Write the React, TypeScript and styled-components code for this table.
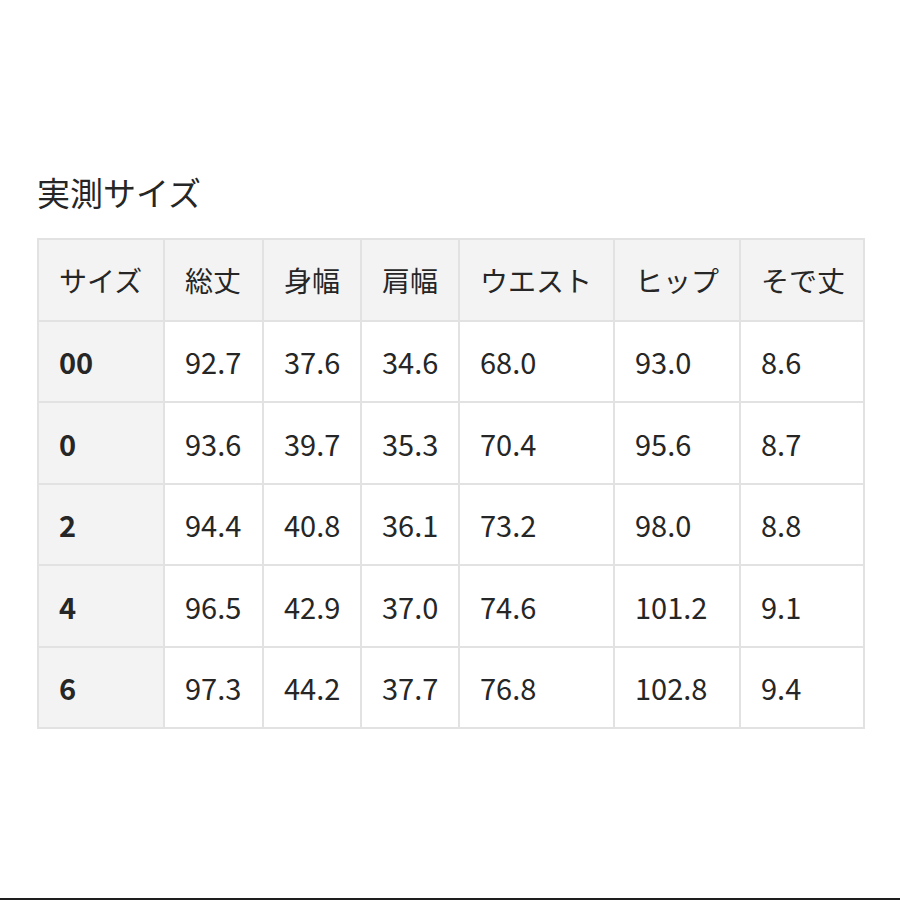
import React from "react";
import styled, { createGlobalStyle } from "styled-components";

const GlobalStyle = createGlobalStyle`
  html, body {
    margin: 0;
    padding: 0;
    background: #ffffff;
  }
  body {
    font-family: "Noto Sans CJK JP", "Noto Sans", sans-serif;
    color: #262626;
  }
`;

const Page = styled.div`
  width: 900px;
  height: 900px;
  display: flex;
  flex-direction: column;
  box-sizing: border-box;
  padding: 170px 37px 0 37px;
  position: relative;
`;

const Title = styled.h2`
  margin: 0 0 24px 0;
  font-size: 33px;
  font-weight: 400;
  line-height: 44px;
  color: #262626;
`;

const Table = styled.table`
  border-collapse: collapse;
  width: 826px;
  table-layout: fixed;
  border: 2px solid #e2e2e2;
`;

const Cell = styled.td<{ $head?: boolean; $bold?: boolean; $label?: boolean }>`
  height: 79.5px;
  padding: 0 0 0 20px;
  border: 2px solid #e2e2e2;
  background: ${(p) => (p.$head ? "#f3f3f3" : "#ffffff")};
  font-size: ${(p) => (p.$label ? "28px" : "29px")};
  font-weight: ${(p) => (p.$bold ? 700 : 400)};
  text-align: left;
  vertical-align: middle;
  white-space: nowrap;
  color: #262626;
`;

const BottomBar = styled.div`
  position: absolute;
  left: 0;
  right: 0;
  bottom: 0;
  height: 2px;
  background: #1e1e1e;
`;

const widths = [126, 99, 98, 98, 155, 126, 124];
const headers = ["サイズ", "総丈", "身幅", "肩幅", "ウエスト", "ヒップ", "そで丈"];
const rows = [
  ["00", "92.7", "37.6", "34.6", "68.0", "93.0", "8.6"],
  ["0", "93.6", "39.7", "35.3", "70.4", "95.6", "8.7"],
  ["2", "94.4", "40.8", "36.1", "73.2", "98.0", "8.8"],
  ["4", "96.5", "42.9", "37.0", "74.6", "101.2", "9.1"],
  ["6", "97.3", "44.2", "37.7", "76.8", "102.8", "9.4"],
];

export default function App() {
  return (
    <>
      <GlobalStyle />
      <Page>
        <Title>実測サイズ</Title>
        <Table>
          <colgroup>
            {widths.map((w, i) => (
              <col key={i} style={{ width: w }} />
            ))}
          </colgroup>
          <thead>
            <tr>
              {headers.map((h) => (
                <Cell as="th" key={h} $head $label>
                  {h}
                </Cell>
              ))}
            </tr>
          </thead>
          <tbody>
            {rows.map((r) => (
              <tr key={r[0]}>
                {r.map((v, i) => (
                  <Cell key={i} $head={i === 0} $bold={i === 0}>
                    {v}
                  </Cell>
                ))}
              </tr>
            ))}
          </tbody>
        </Table>
        <BottomBar />
      </Page>
    </>
  );
}
